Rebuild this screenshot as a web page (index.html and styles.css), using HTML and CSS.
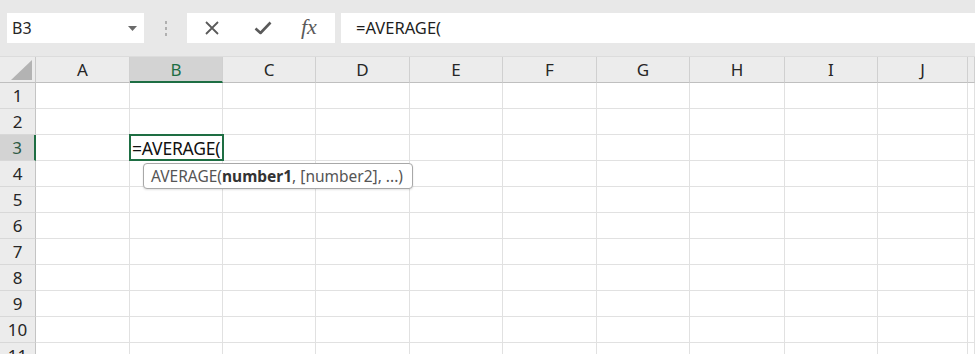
FILE: index.html
```html
<!DOCTYPE html>
<html>
<head>
<meta charset="utf-8">
<link rel="stylesheet" href="styles.css">
</head>
<body>
<div class="app">
  <div class="topbar">
    <div class="namebox">
      <span class="name">B3</span>
      <svg class="dd" width="9" height="5" viewBox="0 0 9 5"><path d="M0 0 L9 0 L4.5 5 Z" fill="#6a6a6a"/></svg>
    </div>
    <div class="dots"><i></i><i></i><i></i></div>
    <div class="fxbtns">
      <svg class="ic" width="16" height="16" viewBox="0 0 16 16"><path d="M2 2 L14 14 M14 2 L2 14" stroke="#5a5a5a" stroke-width="1.8" fill="none"/></svg>
      <svg class="ic" width="18" height="14" viewBox="0 0 18 14"><path d="M1.5 7.5 L6.5 12 L16.5 1.5" stroke="#5a5a5a" stroke-width="2.6" fill="none" stroke-linejoin="round"/></svg>
      <span class="fx">fx</span>
    </div>
    <div class="formula">=AVERAGE(</div>
  </div>
  <div class="sheet">
    <div class="corner"><svg width="21" height="20" viewBox="0 0 21 20"><path d="M21 0 L21 20 L0 20 Z" fill="#b3b3b3"/></svg></div>
    <div class="ch">A</div><div class="ch sel">B</div><div class="ch">C</div><div class="ch">D</div><div class="ch">E</div><div class="ch">F</div><div class="ch">G</div><div class="ch">H</div><div class="ch">I</div><div class="ch">J</div><div class="ch last"></div>

    <div class="rh">1</div><div class="c"></div><div class="c"></div><div class="c"></div><div class="c"></div><div class="c"></div><div class="c"></div><div class="c"></div><div class="c"></div><div class="c"></div><div class="c"></div><div class="c"></div>
    <div class="rh">2</div><div class="c"></div><div class="c"></div><div class="c"></div><div class="c"></div><div class="c"></div><div class="c"></div><div class="c"></div><div class="c"></div><div class="c"></div><div class="c"></div><div class="c"></div>
    <div class="rh selr">3</div><div class="c"></div>
    <div class="c active"><span class="ctext">=AVERAGE(</span>
      <div class="tip">AVERAGE(<b>number1</b>, [number2], ...)</div>
    </div>
    <div class="c"></div><div class="c"></div><div class="c"></div><div class="c"></div><div class="c"></div><div class="c"></div><div class="c"></div><div class="c"></div><div class="c"></div>
    <div class="rh">4</div><div class="c"></div><div class="c"></div><div class="c"></div><div class="c"></div><div class="c"></div><div class="c"></div><div class="c"></div><div class="c"></div><div class="c"></div><div class="c"></div><div class="c"></div>
    <div class="rh">5</div><div class="c"></div><div class="c"></div><div class="c"></div><div class="c"></div><div class="c"></div><div class="c"></div><div class="c"></div><div class="c"></div><div class="c"></div><div class="c"></div><div class="c"></div>
    <div class="rh">6</div><div class="c"></div><div class="c"></div><div class="c"></div><div class="c"></div><div class="c"></div><div class="c"></div><div class="c"></div><div class="c"></div><div class="c"></div><div class="c"></div><div class="c"></div>
    <div class="rh">7</div><div class="c"></div><div class="c"></div><div class="c"></div><div class="c"></div><div class="c"></div><div class="c"></div><div class="c"></div><div class="c"></div><div class="c"></div><div class="c"></div><div class="c"></div>
    <div class="rh">8</div><div class="c"></div><div class="c"></div><div class="c"></div><div class="c"></div><div class="c"></div><div class="c"></div><div class="c"></div><div class="c"></div><div class="c"></div><div class="c"></div><div class="c"></div>
    <div class="rh">9</div><div class="c"></div><div class="c"></div><div class="c"></div><div class="c"></div><div class="c"></div><div class="c"></div><div class="c"></div><div class="c"></div><div class="c"></div><div class="c"></div><div class="c"></div>
    <div class="rh">10</div><div class="c"></div><div class="c"></div><div class="c"></div><div class="c"></div><div class="c"></div><div class="c"></div><div class="c"></div><div class="c"></div><div class="c"></div><div class="c"></div><div class="c"></div>
    <div class="rh">11</div><div class="c"></div><div class="c"></div><div class="c"></div><div class="c"></div><div class="c"></div><div class="c"></div><div class="c"></div><div class="c"></div><div class="c"></div><div class="c"></div><div class="c"></div>
  </div>
</div>
</body>
</html>
```

FILE: styles.css
```css
* { box-sizing: border-box; }
html, body { margin: 0; padding: 0; }
body {
  width: 975px;
  height: 354px;
  overflow: hidden;
  background: #ffffff;
  font-family: "Noto Sans", "Open Sans", sans-serif;
  color: #222;
}
.app { width: 975px; height: 354px; overflow: hidden; }

.topbar {
  height: 57px;
  background: #e8e8e8;
  display: flex;
  align-items: flex-start;
  padding-top: 13px;
  border-bottom: 1px solid #dcdcdc;
}
.namebox {
  margin-left: 7px;
  width: 137px;
  height: 30px;
  background: #fff;
  display: flex;
  align-items: center;
  justify-content: space-between;
  padding: 0 7px 0 5px;
}
.name { font-size: 16px; color: #262626; }
.dd { margin-top: 1px; }
.dots {
  width: 43px;
  height: 30px;
  display: flex;
  flex-direction: column;
  align-items: center;
  justify-content: center;
  gap: 3px;
}
.dots i { display: block; width: 2px; height: 3px; background: #b0b0b0; }
.fxbtns {
  width: 148px;
  height: 30px;
  background: #fff;
  display: flex;
  align-items: center;
  padding-left: 17px;
}
.fxbtns .ic:nth-child(1) { margin-right: 34px; }
.fxbtns .ic:nth-child(2) { margin-right: 29px; }
.fx {
  font-family: "Liberation Serif", "DejaVu Serif", serif;
  font-style: italic;
  font-size: 22px;
  color: #5a5a5a;
  margin-top: -3px;
}
.formula {
  margin-left: 6px;
  flex: 1;
  height: 30px;
  background: #fff;
  font-size: 16.5px;
  line-height: 30px;
  padding-left: 15px;
  color: #1e1e1e;
}

.sheet {
  display: grid;
  grid-template-columns: 36px 94px 93px 93px 94px 93px 94px 93px 95px 93px 90px 1fr;
  grid-auto-rows: 26px;
}
.corner {
  background: #ececec;
  border-right: 1px solid #c9c9c9;
  border-bottom: 1px solid #bfbfbf;
  display: flex;
  align-items: flex-end;
  justify-content: flex-end;
  padding: 0 3px 2px 0;
}
.ch {
  background: #ececec;
  border-right: 1px solid #d0d0d0;
  border-bottom: 1px solid #bfbfbf;
  font-size: 17px;
  color: #262626;
  display: flex;
  align-items: center;
  justify-content: center;
}
.ch.sel {
  background: #d3d3d3;
  color: #1e6e43;
  border-bottom: 2px solid #1e6e43;
}
.rh {
  background: #ececec;
  border-right: 1px solid #c4c4c4;
  border-bottom: 1px solid #d8d8d8;
  font-size: 17px;
  color: #262626;
  display: flex;
  align-items: center;
  justify-content: center;
}
.rh.selr {
  background: #d3d3d3;
  color: #2e5a44;
  border-right: 2px solid #1e6e43;
}
.c {
  border-right: 1px solid #e1e1e1;
  border-bottom: 1px solid #e1e1e1;
}
.c.active {
  position: relative;
  border: 2px solid #1e6e43;
  margin: -1px -1px 0 -1px;
  display: flex;
  align-items: center;
  padding-left: 1px;
  overflow: visible;
  z-index: 2;
}
.ctext { font-size: 17.5px; color: #111; letter-spacing: -0.2px; white-space: nowrap; }
.tip {
  position: absolute;
  left: 12px;
  top: 27px;
  width: 270px;
  height: 26px;
  background: #fff;
  border: 1px solid #a8a8a8;
  border-radius: 4px;
  box-shadow: 0 1px 2px rgba(0,0,0,0.12);
  font-size: 15.5px;
  line-height: 24px;
  padding-left: 7px;
  color: #555;
  white-space: nowrap;
}
.tip b { color: #333; font-weight: 700; }
```
